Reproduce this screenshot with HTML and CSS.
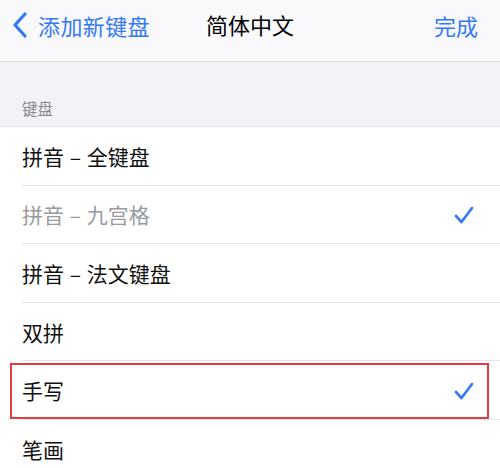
FILE: index.html
```html
<!DOCTYPE html>
<html>
<head>
    <meta charset="utf-8">
    <title>简体中文</title>
    <link rel="stylesheet" href="styles.css">
</head>
<body>
    <div class="nav-bar">
        <a class="nav-back">
            <svg class="chevron" width="16" height="26" viewBox="0 0 16 26">
                <path d="M13 2 L3 13 L13 24" fill="none" stroke="#3478f6" stroke-width="3.2" stroke-linecap="round" stroke-linejoin="round"/>
            </svg>
            <span>添加新键盘</span>
        </a>
        <div class="nav-title">简体中文</div>
        <a class="nav-done">完成</a>
    </div>

    <div class="section-header">键盘</div>

    <div class="list">
        <div class="row">
            <span class="row-label">拼音 – 全键盘</span>
        </div>
        <div class="row">
            <span class="row-label disabled">拼音 – 九宫格</span>
            <svg class="check" width="20" height="18" viewBox="0 0 20 18">
                <path d="M2 10 L7.5 16 L18 2" fill="none" stroke="#3478f6" stroke-width="2.6" stroke-linecap="round" stroke-linejoin="round"/>
            </svg>
        </div>
        <div class="row">
            <span class="row-label">拼音 – 法文键盘</span>
        </div>
        <div class="row">
            <span class="row-label">双拼</span>
        </div>
        <div class="row highlighted">
            <span class="row-label">手写</span>
            <svg class="check" width="20" height="18" viewBox="0 0 20 18">
                <path d="M2 10 L7.5 16 L18 2" fill="none" stroke="#3478f6" stroke-width="2.6" stroke-linecap="round" stroke-linejoin="round"/>
            </svg>
        </div>
        <div class="row">
            <span class="row-label">笔画</span>
        </div>
    </div>
</body>
</html>
```

FILE: styles.css
```css
body {
    margin: 0;
    width: 500px;
    height: 468px;
    overflow: hidden;
    background: #ffffff;
    font-family: "Noto Sans CJK SC", "Noto Sans", sans-serif;
    color: #111;
}
.nav-bar {
    height: 61px;
    box-sizing: content-box;
    display: flex;
    align-items: center;
    justify-content: space-between;
    padding: 0 22px 0 12px;
    background: #f9f9fb;
    border-bottom: 1px solid #e2e2e6;
    position: relative;
    font-size: 22px;
}
.nav-back,
.nav-done {
    margin-top: -12px;
}
.nav-back {
    display: flex;
    align-items: center;
    gap: 10px;
    color: #3478f6;
}
.nav-back span {
    letter-spacing: 0.4px;
}
.chevron {
    display: block;
    margin-top: 1px;
}
.nav-title {
    position: absolute;
    left: 0;
    right: 0;
    top: 0;
    line-height: 49px;
    text-align: center;
    color: #000;
    pointer-events: none;
}
.nav-done {
    color: #3478f6;
}
.section-header {
    background: #f2f2f7;
    height: 65px;
    box-sizing: border-box;
    padding: 0 22px 7px;
    display: flex;
    align-items: flex-end;
    font-size: 15.5px;
    color: #8a8a8e;
    border-bottom: 1px solid #e4e4e8;
}
.list {
    background: #fff;
}
.row {
    height: 58.6px;
    box-sizing: border-box;
    margin-left: 22px;
    padding-right: 26px;
    display: flex;
    align-items: center;
    justify-content: space-between;
    border-bottom: 1px solid #e4e4e8;
    position: relative;
}
.row-label {
    font-size: 21px;
    color: #111;
    word-spacing: 1px;
}
.row-label.disabled {
    color: #9a9a9e;
}
.check {
    display: block;
    margin-top: 2px;
}
.row.highlighted::before {
    content: "";
    position: absolute;
    left: -12px;
    right: 11px;
    top: 2px;
    bottom: 0;
    border: 2px solid #e23b40;
}
```
